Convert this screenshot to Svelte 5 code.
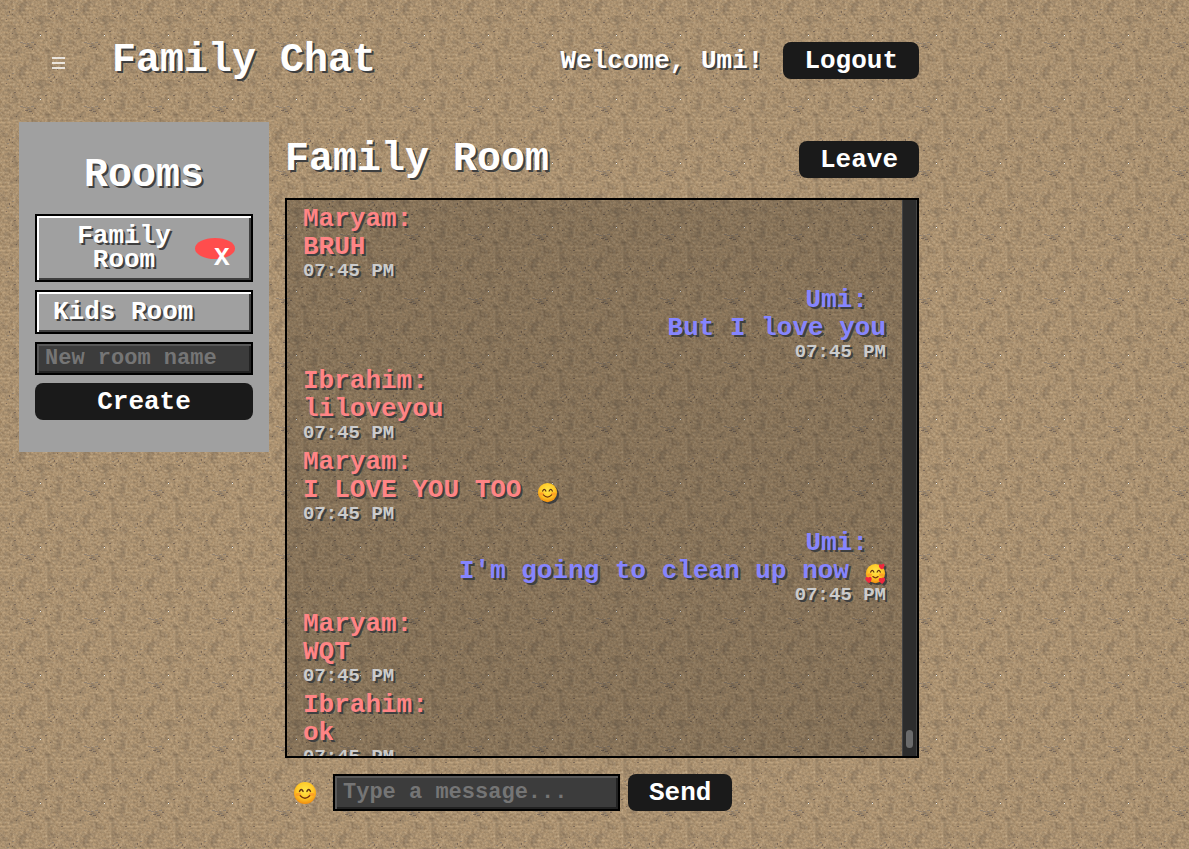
<script>
  const rooms = [
    { name: 'Family Room', removable: true },
    { name: 'Kids Room', removable: false }
  ];
  const messages = [
    { from: 'Maryam', text: 'BRUH' },
    { from: 'Umi', text: 'But I love you', own: true },
    { from: 'Ibrahim', text: 'liloveyou' },
    { from: 'Maryam', text: 'I LOVE YOU TOO', emoji: 'smile' },
    { from: 'Umi', text: "I'm going to clean up now", emoji: 'love', own: true },
    { from: 'Maryam', text: 'WQT' },
    { from: 'Ibrahim', text: 'ok' }
  ];
  let draft = $state('');
  let newRoom = $state('');
</script>

{#snippet face(kind)}
  <svg class="emoji" viewBox="0 0 24 24" role="img" aria-label={kind === 'love' ? 'smiling face with hearts' : 'smiling face'}>
    <defs>
      <radialGradient id="glow-{kind}" cx="50%" cy="38%" r="62%">
        <stop offset="0" stop-color="#ffe64a" />
        <stop offset="0.6" stop-color="#ffc928" />
        <stop offset="1" stop-color="#f08c10" />
      </radialGradient>
    </defs>
    <circle cx="12" cy="12" r="11" fill="url(#glow-{kind})" />
    <ellipse cx="5.5" cy="13.5" rx="2.8" ry="1.8" fill="#ff8a24" opacity="0.6" />
    <ellipse cx="18.5" cy="13.5" rx="2.8" ry="1.8" fill="#ff8a24" opacity="0.6" />
    <path d="M6.500 10.400q1.800-3.800 3.600 0M13.900 10.400q1.800-3.800 3.600 0" fill="none" stroke="#603213" stroke-width="1.4" stroke-linecap="round" />
    <path d={kind === 'love' ? 'M9 15.500q3 2.800 6 0' : 'M7.300 14.800q4.700 5 9.400 0'} fill="none" stroke="#74340f" stroke-width="1.4" stroke-linecap="round" />
    {#if kind === 'love'}
      <g fill="#f0293d">
        <path d="M19.500 7.500C14 4.500 15.500 0 18.800 2 21-1 25 2.500 19.500 7.500Z" />
        <path d="M4.800 23C-2 19.500 0 14 4 16.500 7 13.500 10 18.500 4.800 23Z" />
        <path d="M19.500 24C14 20.500 15 16 18.800 17.500 22 14.500 26 19 19.500 24Z" />
      </g>
    {/if}
  </svg>
{/snippet}

<div class="app">
  <header>
    <button class="menu" aria-label="Toggle rooms">
      <svg viewBox="0 0 15 12" aria-hidden="true"><path d="M1 1h13M1 6h13M1 11h13" stroke="#fff" stroke-width="1.6" /></svg>
    </button>
    <h1>Family Chat</h1>
    <span class="welcome">Welcome, Umi!</span>
    <button class="btn">Logout</button>
  </header>

  <div class="body">
    <aside>
      <h2>Rooms</h2>
      {#each rooms as room}
        <div class="room">
          <a href="#room" class:centered={room.removable}>{room.name}</a>
          {#if room.removable}<button class="remove" aria-label="Delete {room.name}">X</button>{/if}
        </div>
      {/each}
      <input class="field small" aria-label="New room name" placeholder="New room name" bind:value={newRoom} />
      <button class="btn">Create</button>
    </aside>

    <main>
      <div class="title">
        <h2>Family Room</h2>
        <button class="btn">Leave</button>
      </div>
      <div class="log">
        <div class="messages">
          {#each messages as m}
            <article class:own={m.own}>
              <div class="from">{m.from}:</div>
              <div class="text">{m.text}{#if m.emoji}<span class="inline">{@render face(m.emoji)}</span>{/if}</div>
              <time>07:45 PM</time>
            </article>
          {/each}
        </div>
        <div class="track"><div class="thumb"></div></div>
      </div>
      <form onsubmit={(e) => e.preventDefault()}>
        <button type="button" class="pick" aria-label="Choose emoji">{@render face('smile')}</button>
        <input class="field" aria-label="Message" placeholder="Type a message..." bind:value={draft} />
        <button class="btn">Send</button>
      </form>
    </main>
  </div>
</div>

<style>
  :global(body) {
    color: #fff;
    font: bold 26px/28px "Liberation Mono", monospace;
    /* sandy 64px tile: warm base, seamless grain, a few fixed specks */
    background: #a88f6d url("data:image/svg+xml,%3Csvg xmlns='http://www.w3.org/2000/svg' width='64' height='64'%3E%3Cfilter id='n' x='0' y='0' width='100%25' height='100%25' color-interpolation-filters='sRGB'%3E%3CfeTurbulence type='fractalNoise' baseFrequency='.375 .5' numOctaves='2' seed='23' stitchTiles='stitch'/%3E%3CfeColorMatrix values='.26 .04 0 0 .525 .24 .07 0 0 .42 .20 .09 0 0 .30 0 0 0 0 1'/%3E%3C/filter%3E%3Cfilter id='m' x='0' y='0' width='100%25' height='100%25' color-interpolation-filters='sRGB'%3E%3CfeTurbulence type='fractalNoise' baseFrequency='.11 .125' numOctaves='4' seed='12' stitchTiles='stitch'/%3E%3CfeColorMatrix values='0 0 0 0 .38 0 0 0 0 .33 0 0 0 0 .28 2.4 0 0 0 -1.15'/%3E%3C/filter%3E%3Crect width='64' height='64' filter='url(%23n)'/%3E%3Crect width='64' height='64' filter='url(%23m)' opacity='.4'/%3E%3Cg fill='%235c4e49' opacity='.6'%3E%3Cpath d='M25 46h3v1h-3zM29 47h3v1h-3zM32 49h1v1h-1zM34 44h2v1h-2zM9 11h1v2h-1zM12 14h1v1h-1zM6 19h1v1h-1zM45 31h2v1h-2zM50 38h1v1h-1zM57 5h1v1h-1zM27 22h2v1h-2zM32 18h1v1h-1zM16 52h1v1h-1zM61 58h2v1h-2zM40 34h1v1h-1zM54 12h1v2h-1zM56 15h1v1h-1zM50 17h2v1h-2zM14 28h2v1h-2zM12 33h1v1h-1z'/%3E%3C/g%3E%3Cpath d='M20 42h3v1h-3zM23 43h3v1h-3zM28 45h2v1h-2zM31 42h3v1h-3zM27 43h2v1h-2zM12 9h2v1h-2zM7 15h2v1h-2zM48 13h2v1h-2zM52 10h2v1h-2z' fill='%23857a70' opacity='.7'/%3E%3Cpath d='M40 35h1v1h-1z' fill='%23eef2f0'/%3E%3C/svg%3E");
  }
  .app {
    box-sizing: border-box;
    max-width: 938px;
    padding: 42px 19px 38px;
    text-shadow: 2px 2px #3f3f3f;
  }
  h1, h2 {
    margin: 0;
    font-size: 40px;
    line-height: 40px;
  }
  button, input {
    font: inherit;
    color: inherit;
  }
  button {
    padding: 0;
    border: 0;
    background: none;
    cursor: pointer;
  }
  svg {
    display: block;
  }
  header {
    display: flex;
    align-items: center;
    height: 37px;
    margin-bottom: 43px;
  }
  .menu {
    padding: 5px 46px 0 32px;
  }
  .menu svg {
    width: 15px;
    height: 12px;
  }
  .welcome {
    margin: 0 20px 0 auto;
  }
  .btn {
    box-sizing: border-box;
    height: 37px;
    padding: 0 21px;
    border-radius: 8px;
    background: #1a1a1a;
    line-height: 34px;
    text-shadow: none;
  }
  .body {
    display: flex;
    align-items: flex-start;
    gap: 16px;
  }
  aside {
    box-sizing: border-box;
    flex: 0 0 250px;
    min-width: 0;
    display: flex;
    flex-direction: column;
    gap: 8px;
    padding: 34px 16px 32px;
    background: #a0a0a0;
  }
  aside h2 {
    margin-bottom: 10px;
    text-align: center;
  }
  .room {
    display: flex;
    align-items: center;
    padding: 8px 16px;
    border: 2px solid #000;
    box-shadow: inset 2px 2px #fff, inset -2px -2px #3f3f3f;
  }
  .room a {
    flex: 1;
    min-width: 0;
    color: inherit;
    line-height: 24px;
    text-decoration: none;
  }
  .room .centered {
    text-align: center;
  }
  .remove {
    display: flex;
    box-sizing: border-box;
    flex: 0 0 40px;
    height: 21px;
    padding: 8px 0 0 19px;
    border-radius: 50%;
    background: #ff4d4d;
    line-height: 24px;
    text-shadow: none;
  }
  .field {
    box-sizing: border-box;
    width: 100%;
    min-width: 0;
    height: 37px;
    padding: 0 8px;
    border: 2px solid #000;
    border-radius: 0;
    outline: 0;
    background: #3c3c3c;
    box-shadow: inset 2px 2px #585858, inset -2px -2px #222;
    font-size: 22px;
  }
  .field.small {
    height: 33px;
  }
  .field::placeholder {
    color: #757575;
    text-shadow: none;
    opacity: 1;
  }
  main {
    flex: 1;
    min-width: 0;
  }
  .title {
    display: flex;
    justify-content: space-between;
    align-items: center;
    height: 37px;
    padding: 19px 0 20px;
  }
  .log {
    box-sizing: border-box;
    display: flex;
    height: calc(100vh - 289px);
    min-height: 200px;
    border: 2px solid #000;
    background: rgba(0, 0, 0, 0.2);
  }
  .messages {
    flex: 1;
    overflow: hidden;
    padding: 5px 16px 0;
  }
  article {
    margin-bottom: 5px;
    color: #ff8585;
  }
  .own {
    color: #8585ff;
    text-align: right;
  }
  .own .from {
    padding-right: 18px;
  }
  .text {
    height: 28px;
    white-space: nowrap;
  }
  .inline {
    display: inline-block;
    margin-left: 16px;
    vertical-align: -6px;
    filter: drop-shadow(2px 2px #3f3f3f);
  }
  .inline .emoji {
    width: 21px;
    height: 21px;
  }
  time {
    display: block;
    color: #ccc;
    font-size: 19px;
    line-height: 20px;
  }
  .track {
    box-sizing: border-box;
    display: flex;
    align-items: flex-end;
    width: 15px;
    padding: 0 3px 8px;
    border: solid #444;
    border-width: 0 1px;
    background: #2c2c2c;
  }
  .thumb {
    width: 8px;
    height: 18px;
    border-radius: 4px;
    background: #6b6b6b;
  }
  form {
    display: flex;
    gap: 8px;
    margin-top: 16px;
  }
  .pick {
    padding: 0 8px;
  }
  .pick .emoji {
    width: 24px;
    height: 24px;
  }
  form .field {
    flex: 0 1 287px;
  }
</style>
